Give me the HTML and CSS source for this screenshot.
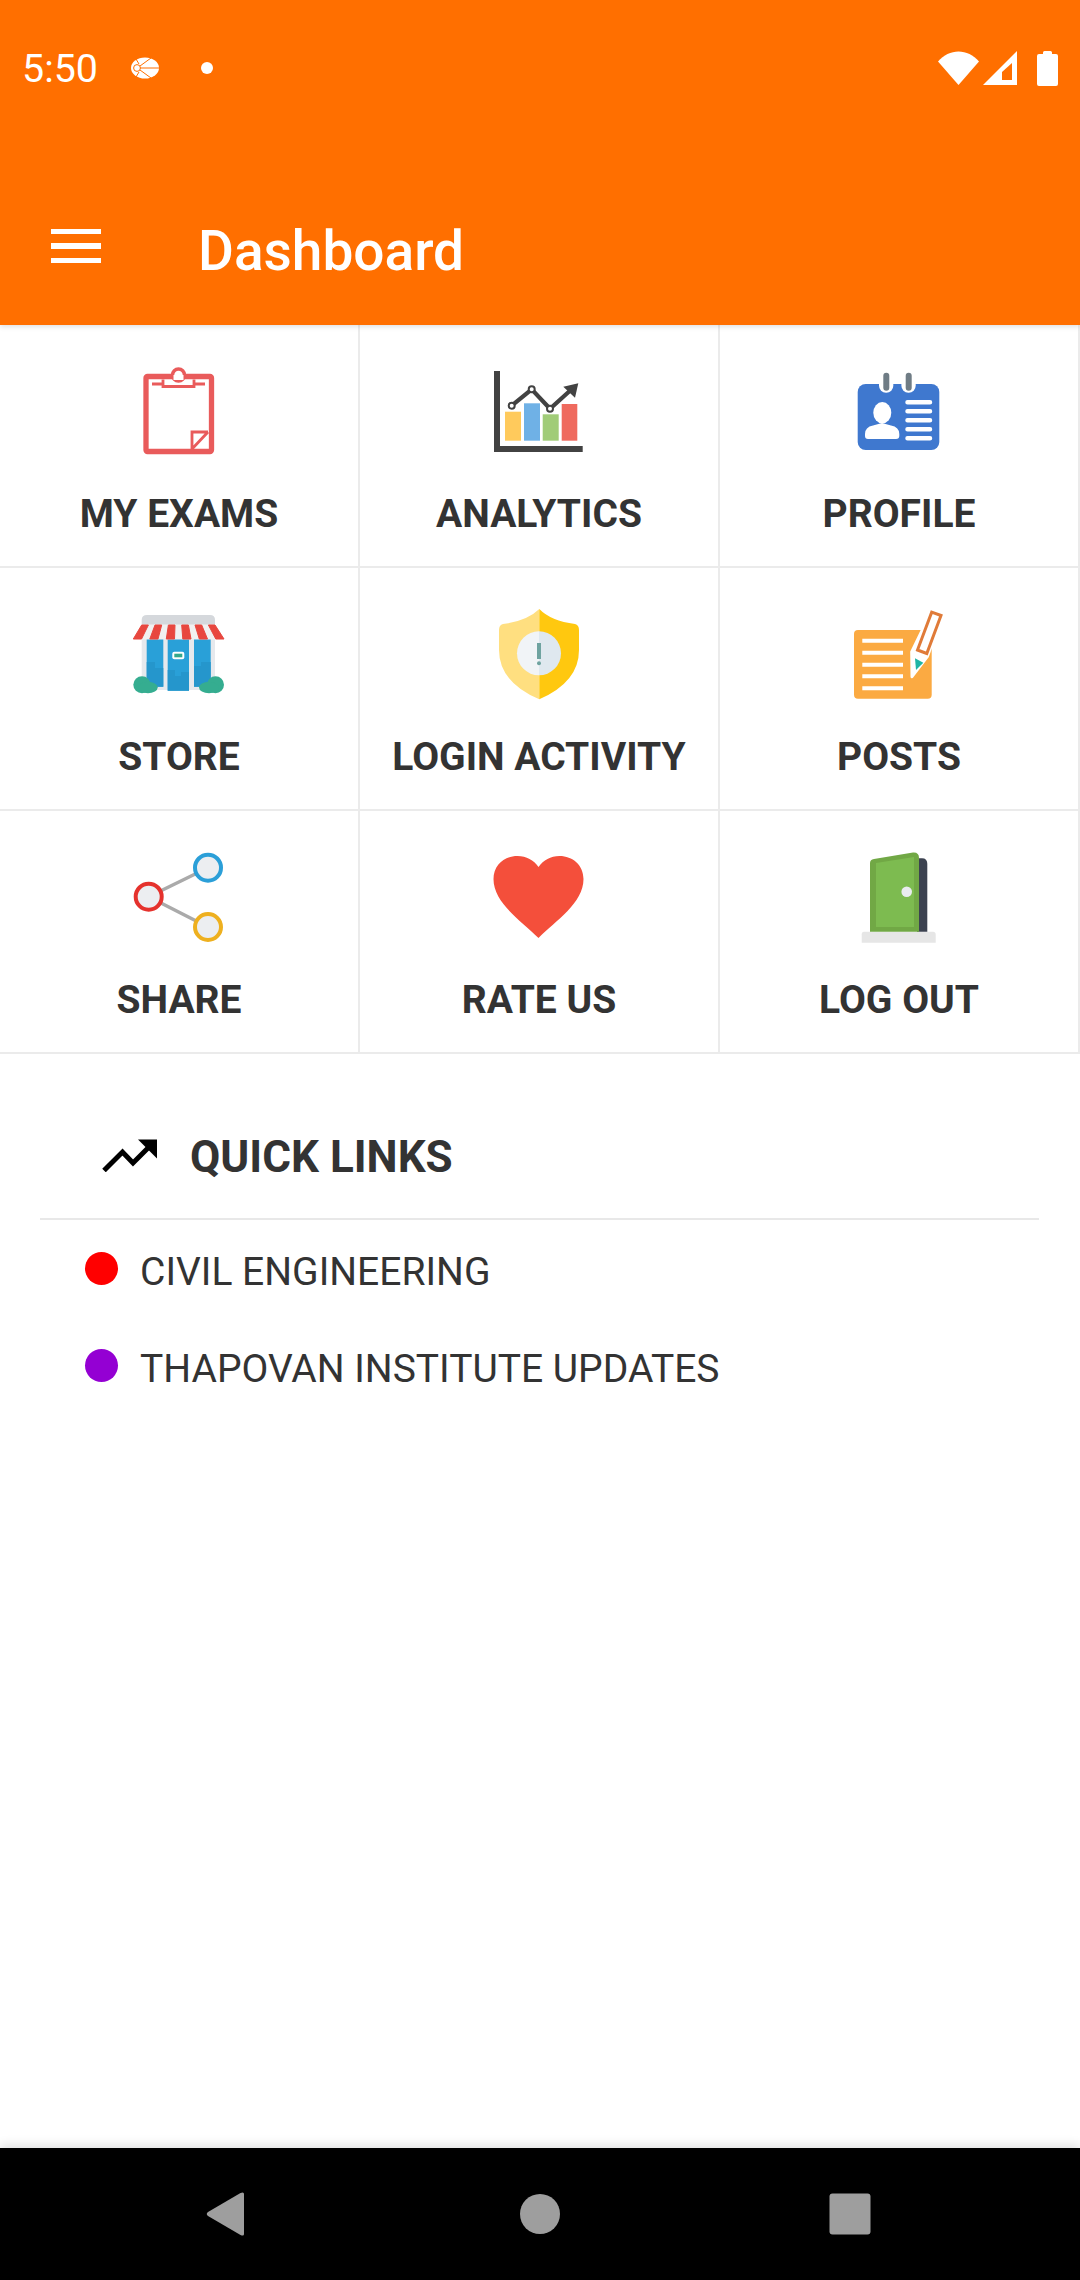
FILE: index.html
```html
<!DOCTYPE html>
<html lang="en">
<head>
    <meta charset="UTF-8">
    <meta name="viewport" content="width=device-width, initial-scale=1.0">
    <title>Dashboard</title>
    <link rel="stylesheet" href="styles.css">
</head>
<body>
    <header class="app-header">
        <div class="status-bar">
            <span class="status-time">5:50</span>
            <svg class="status-app" viewBox="0 0 28 22">
                <ellipse cx="14" cy="11" rx="14" ry="10.5" fill="#fff"/>
                <circle cx="6" cy="11" r="3.4" fill="none" stroke="#ff6f00" stroke-width="1"/>
                <path d="M9 11H28M9 9L20 1M9 13L20 21M5 2L8 7M5 20L8 15" stroke="#ff6f00" stroke-width="1" fill="none"/>
            </svg>
            <span class="status-dot"></span>
            <span class="status-spacer"></span>
            <svg class="status-wifi" viewBox="0 0 41 34"><path d="M0 10.500C11-3 30-3 41 10.500L20.500 34Z" fill="#fff"/></svg>
            <svg class="status-signal" viewBox="0 0 34 34">
                <path d="M34 0V34H0Z" fill="#fff"/>
                <path d="M29 12V29H19V21Z" fill="#ff6f00"/>
            </svg>
            <svg class="status-battery" viewBox="0 0 21 35"><path d="M6 3V1.500Q6 0 7.500 0H13.500Q15 0 15 1.500V3H19Q21 3 21 5V33Q21 35 19 35H2Q0 35 0 33V5Q0 3 2 3Z" fill="#fff"/></svg>
        </div>
        <div class="toolbar">
            <div class="menu-btn"><span></span><span></span><span></span></div>
            <h1>Dashboard</h1>
        </div>
    </header>

    <main class="content">
        <div class="tile-grid">
            <div class="tile">
                <svg class="tile-icon" viewBox="0 0 96 96">
                    <rect x="15" y="11.500" width="65.500" height="75" rx="1.500" fill="#fff" stroke="#e95b5b" stroke-width="5.300"/>
                    <circle cx="47.500" cy="10" r="6" fill="#fff" stroke="#e95b5b" stroke-width="3.500"/>
                    <rect x="42.500" y="10" width="10" height="5" fill="#fff"/>
                    <path d="M21 19H32M32 14.500V21.500H63V14.500M63 19H74" fill="none" stroke="#e95b5b" stroke-width="2.800"/>
                    <path d="M77 67H61V84M61 84L77 67" fill="none" stroke="#e95b5b" stroke-width="2.800"/>
                </svg>
                <span class="tile-label">MY EXAMS</span>
            </div>
            <div class="tile">
                <svg class="tile-icon" viewBox="0 0 96 96">
                    <rect x="14" y="46.700" width="16" height="29" fill="#ffca5c"/>
                    <rect x="33" y="38.300" width="16" height="37.400" fill="#6fb1e6"/>
                    <rect x="51.700" y="49.300" width="16" height="26.400" fill="#a1cc78"/>
                    <rect x="70.700" y="39" width="15.600" height="36.700" fill="#ef6a5e"/>
                    <path d="M3 6H9V81H91.700V87H3Z" fill="#424242"/>
                    <path d="M20.700 40.700L40.700 24.300L59 43.700L82 23" fill="none" stroke="#424242" stroke-width="4.200"/>
                    <path d="M87.300 18.300L72.300 21.700L84 32.700Z" fill="#424242"/>
                    <circle cx="20.700" cy="40.700" r="3" fill="#fff" stroke="#424242" stroke-width="2"/>
                    <circle cx="40.700" cy="24.300" r="3" fill="#fff" stroke="#424242" stroke-width="2"/>
                    <circle cx="59" cy="43.700" r="3" fill="#fff" stroke="#424242" stroke-width="2"/>
                </svg>
                <span class="tile-label">ANALYTICS</span>
            </div>
            <div class="tile">
                <svg class="tile-icon" viewBox="0 0 96 96">
                    <rect x="6.700" y="19" width="81.600" height="66" rx="8" fill="#3f78cf"/>
                    <rect x="28" y="10" width="14.300" height="17.700" rx="7" fill="#fff"/>
                    <rect x="50.400" y="10" width="14.300" height="17.700" rx="7" fill="#fff"/>
                    <rect x="32.300" y="7.700" width="6" height="18" rx="3" fill="#6f7c85"/>
                    <rect x="54.700" y="7.700" width="6" height="18" rx="3" fill="#6f7c85"/>
                    <ellipse cx="31.300" cy="47.700" rx="9" ry="10.700" fill="#fff"/>
                    <path d="M14 69Q14 62 22 60.500L31 58L40 60.500Q48.300 62 48.300 69V71Q48.300 74 45 74H17Q14 74 14 71Z" fill="#fff"/>
                    <path d="M56.500 37.300H79M56.500 46.300H79M56.500 55.300H79M56.500 64.300H79M56.500 73.300H79" stroke="#fff" stroke-width="4.500" stroke-linecap="round"/>
                </svg>
                <span class="tile-label">PROFILE</span>
            </div>
            <div class="tile">
                <svg class="tile-icon" viewBox="0 0 96 96">
                    <path d="M10.700 12Q10.700 7 16 7H79Q84 7 84 12V17H10.700Z" fill="#d5d8dc"/>
                    <rect x="10.700" y="17" width="73.300" height="65" fill="#e6e9ed"/>
                    <rect x="15.700" y="31" width="16.600" height="47.700" fill="#29a0d8"/>
                    <rect x="36.700" y="31" width="21.300" height="51.700" fill="#29a0d8"/>
                    <rect x="63" y="31" width="16.700" height="47.700" fill="#29a0d8"/>
                    <path d="M15.700 54H24V60H32.300V78.700H15.700ZM63 58H70V54H79.700V78.700H63ZM36.700 62H44V68H50V64H58V82.700H36.700Z" fill="#2596cc"/>
                    <rect x="41.300" y="43.700" width="12" height="7.600" rx="2" fill="#fff"/>
                    <rect x="43.300" y="45.700" width="8" height="3.600" fill="#35a88b"/>
                    <path d="M10.700 17H84L93 31H2.300Z" fill="#f1f1f1" stroke="#f1f1f1" stroke-width="1" stroke-linejoin="round"/>
                    <path d="M10.700 17H17.400L10.550 31H2.300ZM24 17H30.700L27 31H18.800ZM37.400 17H44L43.500 31H35.300ZM50.700 17H57.400L60 31H51.800ZM64 17H70.700L76.500 31H68.300ZM77.400 17H84L93 31H84.800Z" fill="#e8473f" stroke="#e8473f" stroke-width="1" stroke-linejoin="round"/>
                    <ellipse cx="11" cy="76.800" rx="8.700" ry="8.500" fill="#35ad90"/>
                    <ellipse cx="17" cy="79.500" rx="9.700" ry="5.800" fill="#35ad90"/>
                    <ellipse cx="84.500" cy="76.800" rx="8.500" ry="8.500" fill="#35ad90"/>
                    <ellipse cx="78" cy="79.500" rx="10" ry="5.800" fill="#35ad90"/>
                </svg>
                <span class="tile-label">STORE</span>
            </div>
            <div class="tile">
                <svg class="tile-icon" viewBox="0 0 96 96">
                    <path d="M48.300 1Q36 13 12 16Q8 17 8 22V42Q8 74 48.300 91.300Z" fill="#ffdf80"/>
                    <path d="M48.300 1Q60 13 84 16Q88 17 88 22V42Q88 74 48.300 91.300Z" fill="#ffc80f"/>
                    <path d="M48 23.300A22 22 0 0 0 48 67.300Z" fill="#f1f4f7"/>
                    <path d="M48 23.300A22 22 0 0 1 48 67.300Z" fill="#dfe8ef"/>
                    <rect x="46" y="35" width="4" height="16" fill="#6fa3a0"/>
                    <circle cx="48" cy="55.300" r="2" fill="#6fa3a0"/>
                </svg>
                <span class="tile-label">LOGIN ACTIVITY</span>
            </div>
            <div class="tile">
                <svg class="tile-icon" viewBox="0 0 96 96">
                    <rect x="3" y="22" width="77.700" height="68.700" rx="4" fill="#fbaa42"/>
                    <path d="M11.300 32.700H52M11.300 44.700H52M11.300 56.700H52M11.300 68.300H52M11.300 80.300H52" stroke="#fff" stroke-width="4"/>
                    <path d="M80.700 2.700L91.700 6.700L76.300 48.700L61 68.700L60.700 44Z" fill="#fff" stroke="#fff" stroke-width="3" stroke-linejoin="round"/>
                    <path d="M80.700 4.200L90 7.500L75.800 45.500L66.500 42Z" fill="#fff" stroke="#e07b39" stroke-width="3"/>
                    <path d="M64 50.300L72.300 54.700L65 62Z" fill="#1fb5a5"/>
                </svg>
                <span class="tile-label">POSTS</span>
            </div>
            <div class="tile">
                <svg class="tile-icon" viewBox="0 0 96 96">
                    <path d="M17.700 45.700L77 16.700M17.700 45.700L77 76" stroke="#aaa" stroke-width="3.500"/>
                    <circle cx="77" cy="16.700" r="13" fill="#eceef1" stroke="#2b9fd8" stroke-width="4"/>
                    <circle cx="17.700" cy="45.700" r="13" fill="#eceef1" stroke="#e5322d" stroke-width="4"/>
                    <circle cx="77" cy="76" r="13" fill="#eceef1" stroke="#eeb01f" stroke-width="4"/>
                </svg>
                <span class="tile-label">SHARE</span>
            </div>
            <div class="tile">
                <svg class="tile-icon" viewBox="0 0 96 96">
                    <path d="M47.500 87C30.500 70 2.500 52 2.500 28C2.500 14 13.500 5 26.500 5C35.500 5 42.500 9 47.500 16C52.500 9 59.500 5 68.500 5C81.500 5 92.500 14 92.500 28C92.500 52 64.500 70 47.500 87Z" fill="#f44f3b"/>
                </svg>
                <span class="tile-label">RATE US</span>
            </div>
            <div class="tile">
                <svg class="tile-icon" viewBox="0 0 96 96">
                    <path d="M13 80.700H82Q84.700 80.700 84.700 83.500V91.700H10.700V83.500Q10.700 80.700 13 80.700Z" fill="#e6e6e6"/>
                    <path d="M66 7.300H71Q76.300 7.300 76.300 13V80.700H66Z" fill="#3c4250"/>
                    <path d="M23 8L62 1.500Q68 1 68 7V80.700H19V12Q19 8.700 23 8Z" fill="#71a845"/>
                    <path d="M25 12L63 6V76H25Z" fill="#7dbb50"/>
                    <circle cx="55.700" cy="40.700" r="5.300" fill="#e9ecef"/>
                </svg>
                <span class="tile-label">LOG OUT</span>
            </div>
        </div>

        <section class="quick-links">
            <div class="quick-head">
                <svg class="trend-icon" viewBox="0 0 55 33"><path d="M2 31.500L20.500 13L31 24L50 5" fill="none" stroke="#000" stroke-width="5"/><path d="M36 0.500H55V19.500Z" fill="#000"/></svg>
                <h2>QUICK LINKS</h2>
            </div>
            <ul class="link-list">
                <li><span class="link-dot dot-red"></span><span class="link-text">CIVIL ENGINEERING</span></li>
                <li><span class="link-dot dot-purple"></span><span class="link-text">THAPOVAN INSTITUTE UPDATES</span></li>
            </ul>
        </section>
    </main>

    <nav class="nav-bar">
        <svg viewBox="0 0 44 44"><path d="M4 20L36.500 1Q40 -0.500 40 2V42Q40 44.500 36.500 43L4 24Q1.500 22 4 20Z" fill="#9e9e9e"/></svg>
        <svg class="nav-home" viewBox="0 0 44 44"><circle cx="22" cy="22" r="20" fill="#9e9e9e"/></svg>
        <svg viewBox="0 0 44 44"><rect x="1.500" y="1.500" width="41" height="41" rx="3" fill="#9e9e9e"/></svg>
    </nav>
</body>
</html>
```

FILE: styles.css
```css
* {
    box-sizing: border-box;
}
body {
    font-family: 'Roboto', sans-serif;
    margin: 0;
    width: 1080px;
    height: 2280px;
    display: flex;
    flex-direction: column;
    background-color: #fff;
    color: #333;
    overflow: hidden;
}
.app-header {
    background-color: #ff6f00;
    color: #fff;
    height: 325px;
    flex: none;
    position: relative;
    box-shadow: 0 2px 5px rgba(0, 0, 0, 0.12);
}
.status-bar {
    height: 116px;
    padding: 20px 22px 0 22px;
    display: flex;
    align-items: center;
}
.status-time {
    font-size: 39.4px;
    width: 109px;
}
.status-app {
    width: 28px;
    height: 22px;
}
.status-dot {
    width: 12px;
    height: 12px;
    border-radius: 50%;
    background-color: #fff;
    margin-left: 42px;
}
.status-spacer {
    flex: 1;
}
.status-wifi {
    width: 41px;
    height: 34px;
}
.status-signal {
    width: 34px;
    height: 34px;
    margin-left: 4px;
}
.status-battery {
    width: 21px;
    height: 35px;
    margin-left: 20px;
}
.toolbar {
    height: 154px;
    margin-top: 55px;
    display: flex;
    align-items: center;
    padding-left: 51px;
}
.menu-btn {
    width: 50px;
    display: flex;
    flex-direction: column;
    gap: 9px;
    margin-bottom: 4px;
}
.menu-btn span {
    height: 5.5px;
    background-color: #fff;
}
.toolbar h1 {
    margin: 6px 0 0 97px;
    font-size: 55px;
    font-weight: 500;
}
.content {
    flex: 1;
}
.tile-grid {
    display: grid;
    grid-template-columns: repeat(3, 360px);
    grid-auto-rows: 243px;
}
.tile {
    display: flex;
    flex-direction: column;
    align-items: center;
    padding-top: 40px;
    border-right: 2px solid #ebebeb;
    border-bottom: 2px solid #ebebeb;
}
.tile-icon {
    width: 96px;
    height: 96px;
    flex: none;
}
.tile-label {
    margin-top: 29px;
    font-size: 39px;
    line-height: 48px;
    font-weight: 700;
    white-space: nowrap;
}
.quick-links {
    margin: 38px 41px 0 40px;
}
.quick-head {
    height: 128px;
    display: flex;
    align-items: center;
    gap: 33px;
    padding-left: 62px;
    border-bottom: 2px solid #e8e8e8;
}
.trend-icon {
    width: 55px;
    height: 33px;
}
.quick-head h2 {
    margin: 3px 0 0;
    font-size: 44px;
    font-weight: 700;
}
.link-list {
    list-style: none;
    margin: 0;
    padding: 0 0 0 45px;
}
.link-list li {
    height: 97px;
    display: flex;
    align-items: center;
    gap: 22px;
    font-size: 39px;
}
.link-text {
    margin-top: 6px;
}
.link-dot {
    width: 33px;
    height: 33px;
    border-radius: 50%;
}
.dot-red {
    background-color: #ff0000;
}
.dot-purple {
    background-color: #9400d3;
}
.nav-bar {
    height: 132px;
    flex: none;
    background-color: #000;
    position: relative;
    display: flex;
    align-items: center;
    justify-content: space-between;
    padding: 0 208px 0 204px;
    box-shadow: 0 -3px 10px rgba(0, 0, 0, 0.12);
}
.nav-bar svg {
    width: 44px;
    height: 44px;
}
.nav-home {
    margin-left: 4px;
}
```
